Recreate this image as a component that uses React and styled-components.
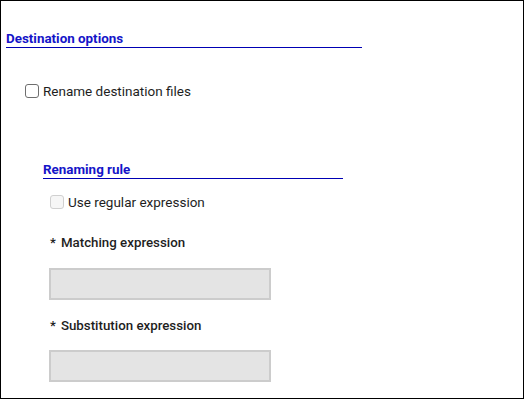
import styled, { createGlobalStyle } from 'styled-components';

const Global = createGlobalStyle`
  body {
    margin: 0;
    font-family: Roboto, "Liberation Sans", sans-serif;
    background: #ffffff;
  }
`;

const Frame = styled.main`
  box-sizing: border-box;
  width: 524px;
  height: 399px;
  border: 1px solid #000000;
  padding: 30px 0 0 5px;
  overflow: hidden;
  display: flex;
  flex-direction: column;
`;

const Heading = styled.h2`
  margin: 0;
  width: ${({ width }) => width}px;
  font-size: 13.4px;
  line-height: 16px;
  font-weight: 700;
  color: #1414c8;
  border-bottom: 1px solid #0000b4;
`;

const Group = styled.section`
  display: flex;
  flex-direction: column;
  margin: ${({ top }) => top}px 0 0 ${({ left }) => left}px;
`;

const CheckRow = styled.label`
  display: flex;
  align-items: center;
  gap: 4px;
  height: 16px;
  margin: ${({ top }) => top}px 0 0 ${({ left }) => left}px;
  font-size: 13.5px;
  color: #1e1e1e;
`;

const Box = styled.span`
  box-sizing: border-box;
  width: 14px;
  height: 14px;
  border-radius: 3px;
  border: 1px solid ${({ disabled }) => (disabled ? '#d0d0d0' : '#6e6e6e')};
  background: ${({ disabled }) => (disabled ? '#f6f6f6' : '#ffffff')};
`;

const FieldLabel = styled.div`
  display: flex;
  gap: 5px;
  height: 16px;
  align-items: center;
  margin: ${({ top }) => top}px 0 0 7px;
  font-size: 13.3px;
  font-weight: 500;
  color: #1e1e1e;
`;

const Input = styled.div`
  box-sizing: border-box;
  width: 222px;
  height: 32px;
  margin: ${({ top }) => top}px 0 0 6px;
  background: #e4e4e4;
  border: 2px solid #cccccc;
`;

export default function App() {
  return (
    <Frame>
      <Global />
      <Heading width={356}>Destination options</Heading>
      <CheckRow top={35} left={19}>
        <Box />
        Rename destination files
      </CheckRow>
      <Group top={63} left={37}>
        <Heading width={300}>Renaming rule</Heading>
        <CheckRow top={15} left={7}>
          <Box disabled />
          Use regular expression
        </CheckRow>
        <FieldLabel top={24}>
          <span>*</span>
          <span>Matching expression</span>
        </FieldLabel>
        <Input top={18} />
        <FieldLabel top={17}>
          <span>*</span>
          <span>Substitution expression</span>
        </FieldLabel>
        <Input top={17} />
      </Group>
    </Frame>
  );
}
